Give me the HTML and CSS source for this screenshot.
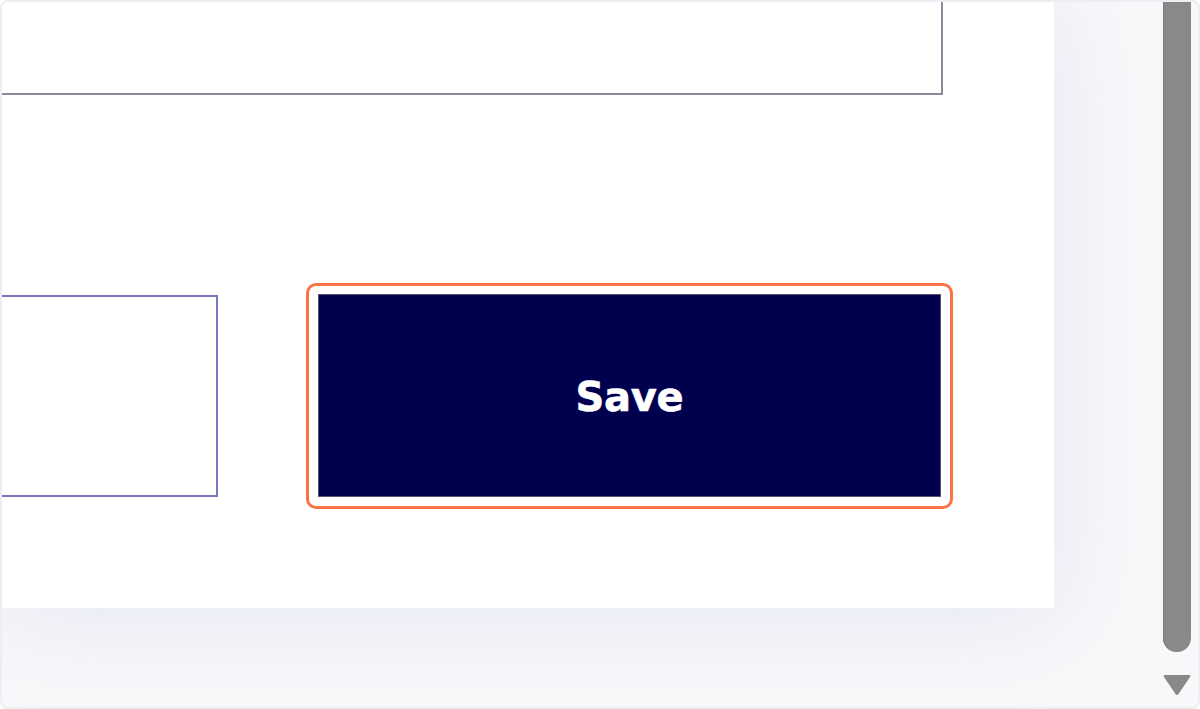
FILE: index.html
```html
<!DOCTYPE html>
<html lang="en">
<head>
<meta charset="utf-8">
<title>Save</title>
<link rel="stylesheet" href="styles.css">
</head>
<body>
<div class="frame">
  <div class="viewport">
    <div class="panel">
      <div class="text-field"></div>
      <div class="actions">
        <div class="secondary-field"></div>
        <div class="focus-ring">
          <button class="save-btn" type="button">Save</button>
        </div>
      </div>
    </div>
  </div>
  <div class="scrollbar">
    <div class="thumb"></div>
    <div class="arrow">
      <svg width="28" height="22" viewBox="0 0 28 22"><path d="M2 1 H26 Q28 1 27 3 L15.5 20 Q14 22 12.5 20 L1 3 Q0 1 2 1 Z" fill="#898989"/></svg>
    </div>
  </div>
</div>
</body>
</html>
```
FILE: styles.css
```css
html, body {
  margin: 0;
  padding: 0;
  background: #ffffff;
}
.frame {
  box-sizing: border-box;
  width: 1200px;
  height: 709px;
  border: 2px solid #ededf2;
  border-radius: 8px;
  background: #f8f8fa;
  overflow: hidden;
  display: flex;
}
.viewport {
  flex: 1;
  overflow: hidden;
}
.panel {
  width: 1052px;
  height: 606px;
  background: #ffffff;
  box-shadow: 0 6px 90px rgba(200, 204, 238, 0.42);
  overflow: hidden;
}
.text-field {
  box-sizing: border-box;
  margin: -20px 0 0 -20px;
  width: 961px;
  height: 113px;
  border: 2px solid #8a8a9a;
  background: #ffffff;
}
.actions {
  display: flex;
  align-items: center;
  margin-top: 188px;
  gap: 88px;
}
.secondary-field {
  box-sizing: border-box;
  margin-left: -20px;
  width: 236px;
  height: 202px;
  border: 2px solid #7878c2;
  background: #ffffff;
}
.focus-ring {
  border: 3px solid #fc7343;
  border-radius: 10px;
  padding: 8px 9px 9px;
  background: #ffffff;
}
.save-btn {
  display: flex;
  align-items: center;
  justify-content: center;
  box-sizing: border-box;
  width: 623px;
  height: 203px;
  margin: 0;
  padding: 3px 0 0;
  border: 1px solid #55556e;
  background: #00004f;
  color: #ffffff;
  font-family: "DejaVu Sans", "Liberation Sans", sans-serif;
  font-weight: bold;
  font-size: 40px;
  letter-spacing: -0.3px;
  -webkit-text-stroke: 0.6px #ffffff;
}
.scrollbar {
  width: 38px;
  display: flex;
  flex-direction: column;
  align-items: flex-start;
  padding-left: 3px;
  box-sizing: border-box;
}
.thumb {
  width: 28px;
  margin-top: -20px;
  height: 670px;
  border-radius: 14px;
  background: #898989;
  box-shadow: inset 1px 0 0 #7a7a7a;
}
.arrow {
  margin-top: 22px;
  width: 28px;
  height: 22px;
  line-height: 0;
}
```
